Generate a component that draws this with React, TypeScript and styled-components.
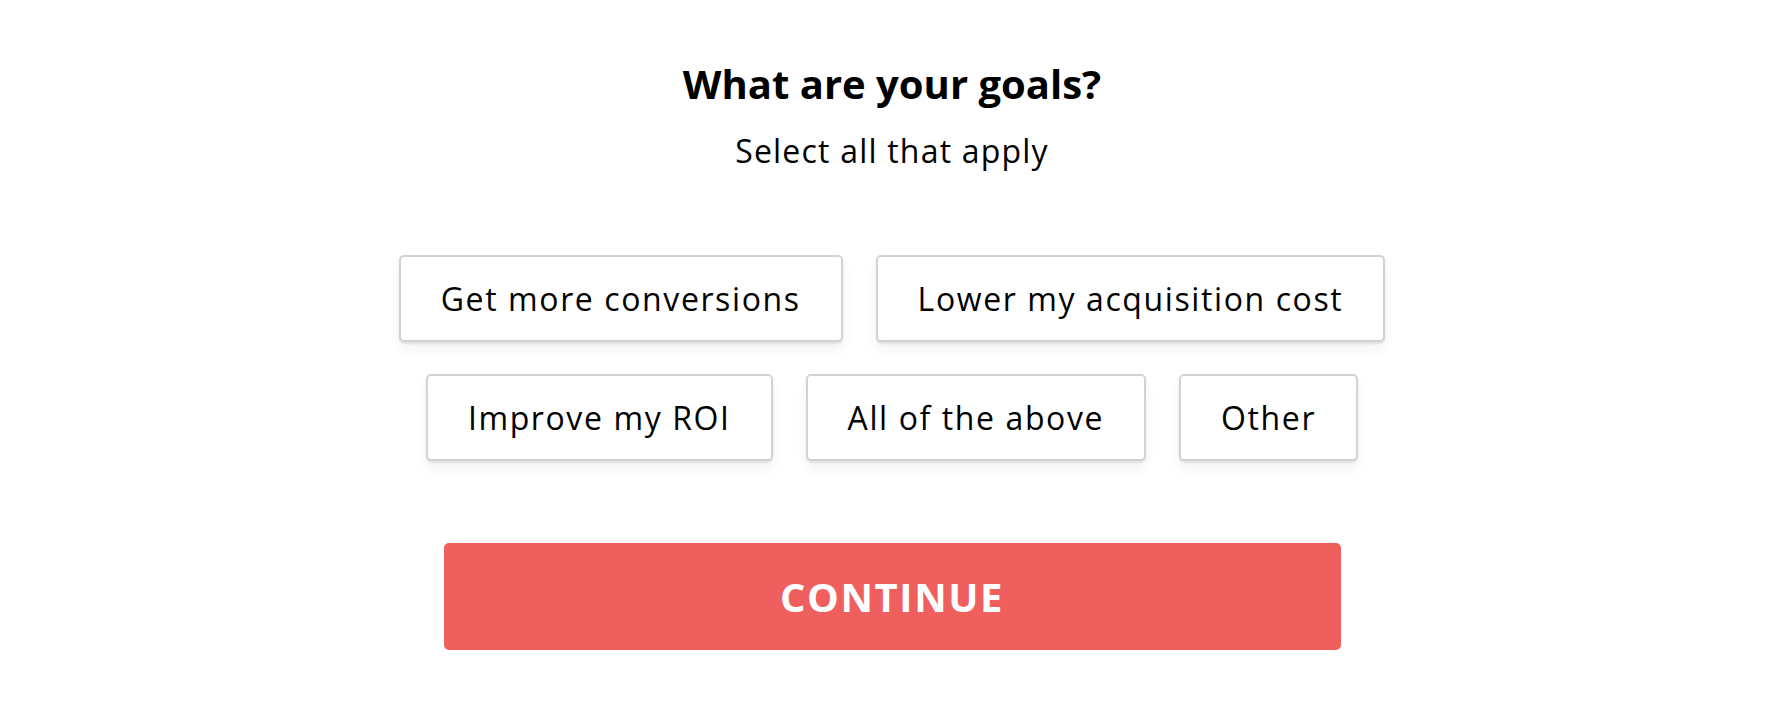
import React from "react";
import styled, { createGlobalStyle } from "styled-components";

const Global = createGlobalStyle`
  html, body { margin: 0; padding: 0; background: #ffffff; }
  body { font-family: "Open Sans", "Noto Sans", sans-serif; color: #000; }
`;

const Page = styled.main`
  display: flex;
  flex-direction: column;
  align-items: center;
  padding-top: 60px;
`;

const Title = styled.h1`
  margin: 0;
  font-size: 40px;
  font-weight: 700;
  line-height: 48px;
  letter-spacing: 0;
`;

const Subtitle = styled.p`
  margin: 23px 0 0;
  font-size: 32px;
  font-weight: 400;
  line-height: 40px;
  letter-spacing: 1.2px;
`;

const Options = styled.div`
  margin-top: 84px;
  display: flex;
  flex-direction: column;
  align-items: center;
  gap: 32px;
`;

const Row = styled.div`
  display: flex;
  gap: 33px;
`;

const Option = styled.button<{ $selected?: boolean }>`
  box-sizing: border-box;
  height: 87px;
  padding: 0 40px;
  background: ${(p) => (p.$selected ? "#fdeeee" : "#ffffff")};
  border: 2px solid #d2d2d2;
  border-radius: 5px;
  box-shadow: 0 2px 2px rgba(0, 0, 0, 0.08), 0 8px 14px rgba(0, 0, 0, 0.05);
  font-family: "Open Sans", "Noto Sans", sans-serif;
  font-size: 32px;
  font-weight: 400;
  letter-spacing: 1.6px;
  color: #000;
  cursor: pointer;
`;

const Continue = styled.button`
  margin-top: 82px;
  box-sizing: border-box;
  width: 897px;
  height: 107px;
  border: none;
  border-radius: 5px;
  background: #ee5f5e;
  color: #ffffff;
  font-family: "Open Sans", "Noto Sans", sans-serif;
  font-size: 40px;
  font-weight: 700;
  letter-spacing: 1.6px;
  cursor: pointer;
`;

const rows = [
  ["Get more conversions", "Lower my acquisition cost"],
  ["Improve my ROI", "All of the above", "Other"],
];

export default function App() {
  return (
    <>
      <Global />
      <Page>
        <Title>What are your goals?</Title>
        <Subtitle>Select all that apply</Subtitle>
        <Options>
          {rows.map((r, i) => (
            <Row key={i}>
              {r.map((label) => (
                <Option key={label}>{label}</Option>
              ))}
            </Row>
          ))}
        </Options>
        <Continue>CONTINUE</Continue>
      </Page>
    </>
  );
}
